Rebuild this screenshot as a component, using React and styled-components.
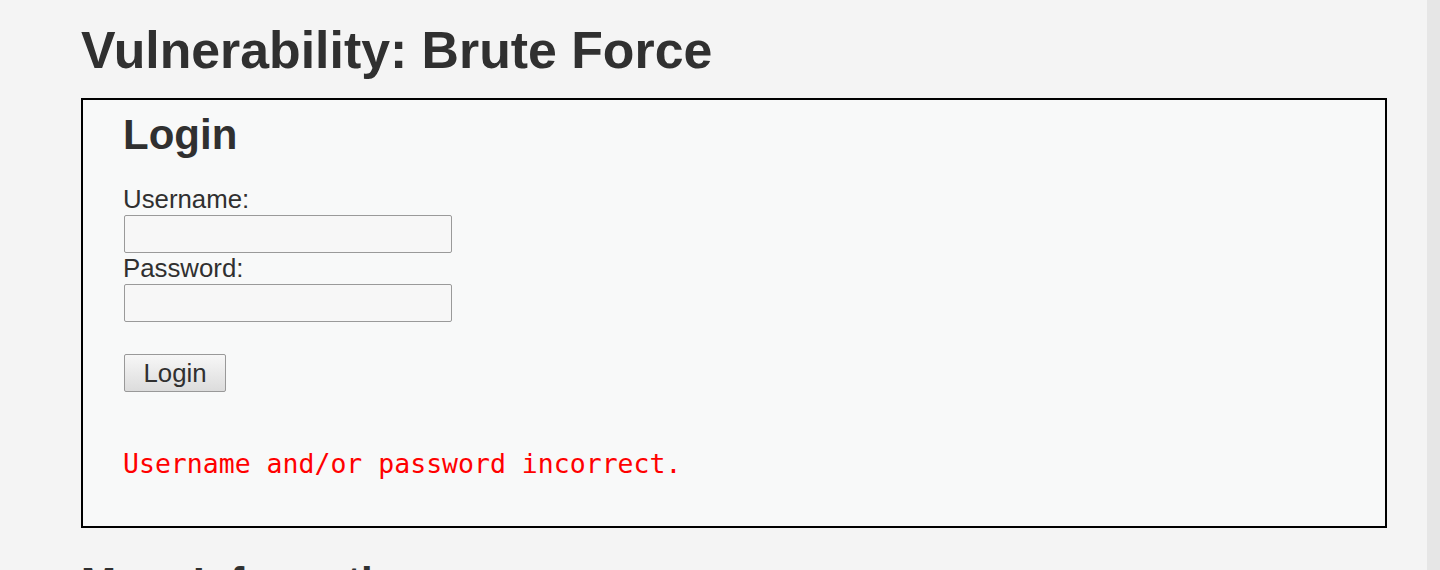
import React from "react";
import styled, { createGlobalStyle } from "styled-components";

const Global = createGlobalStyle`
  html, body { margin: 0; padding: 0; overflow: hidden; }
  body {
    background: #f4f4f4;
    color: #303030;
    font-family: "Liberation Sans", Arial, sans-serif;
  }
`;

const Page = styled.div`
  display: flex;
  height: 570px;
  overflow: hidden;
`;

const Main = styled.main`
  flex: 1;
  padding: 0 40px 0 81px;
  min-width: 0;
`;

const Scrollbar = styled.div`
  width: 13px;
  flex: none;
  background: #e6e6e6;
`;

const Title = styled.h1`
  margin: 20px 0 18px;
  font-size: 51.8px;
  line-height: 60px;
  font-weight: 700;
  color: #303030;
`;

const Panel = styled.div`
  border: 2px solid #000;
  background: #f8f9f9;
  padding: 11px 40px 47px;
`;

const Heading = styled.h2`
  margin: 0 0 25px;
  font-size: 42px;
  line-height: 48px;
  font-weight: 700;
  color: #303030;
`;

const Form = styled.form`
  display: flex;
  flex-direction: column;
  align-items: flex-start;
`;

const Label = styled.label`
  display: block;
  font-size: 25.8px;
  line-height: 31px;
  color: #303030;
`;

const Input = styled.input`
  box-sizing: border-box;
  width: 328px;
  height: 38px;
  margin: 0 0 0 1px;
  border: 1px solid #9a9a9a;
  border-radius: 2px;
  background: #f7f7f7;
  font-size: 20px;
  padding: 0 6px;
`;

const Button = styled.button`
  box-sizing: border-box;
  margin: 32px 0 0 1px;
  width: 102px;
  height: 38px;
  padding: 0;
  border: 1px solid #999;
  border-radius: 2px;
  background: linear-gradient(#f7f7f7, #dcdcdc);
  font-family: "Liberation Sans", Arial, sans-serif;
  font-size: 25.8px;
  line-height: 30px;
  color: #303030;
`;

const Error = styled.pre`
  margin: 56px 0 0;
  font-family: "DejaVu Sans Mono", monospace;
  font-size: 26.5px;
  line-height: 31px;
  color: #ff0000;
`;

const SubHeading = styled.h2`
  margin: 31px 0 0;
  font-size: 42px;
  line-height: 48px;
  font-weight: 700;
  color: #303030;
`;

export default function App() {
  return (
    <>
      <Global />
      <Page>
        <Main>
          <Title>Vulnerability: Brute Force</Title>
          <Panel>
            <Heading>Login</Heading>
            <Form onSubmit={(e) => e.preventDefault()}>
              <Label htmlFor="username">Username:</Label>
              <Input id="username" type="text" name="username" />
              <Label htmlFor="password">Password:</Label>
              <Input id="password" type="password" name="password" />
              <Button type="submit">Login</Button>
            </Form>
            <Error>Username and/or password incorrect.</Error>
          </Panel>
          <SubHeading>More Information</SubHeading>
        </Main>
        <Scrollbar />
      </Page>
    </>
  );
}
